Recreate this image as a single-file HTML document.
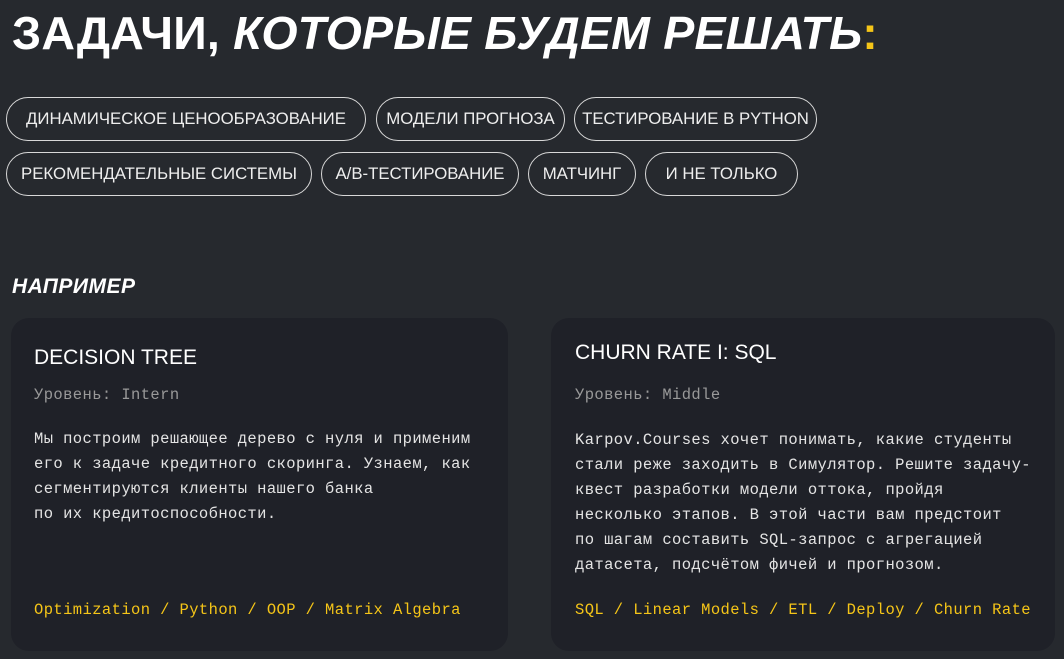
<!DOCTYPE html>
<html><head><meta charset="utf-8"><style>
*{margin:0;padding:0;box-sizing:border-box}
body{width:1064px;height:659px;background:#26292e;color:#fff;font-family:"Liberation Sans",sans-serif;position:relative;overflow:hidden}
h1{position:absolute;left:12px;top:6px;font-size:46.5px;font-weight:700;letter-spacing:0.2px;white-space:nowrap}
h1 i{font-style:italic}
h1 .y{color:#f5c518}
.pill{position:absolute;height:44px;border:1px solid #d8d8d8;border-radius:22px;font-size:16.8px;line-height:42px;text-align:center;color:#eee;white-space:nowrap}
h3{position:absolute;left:12px;top:275px;font-size:21px;font-style:italic;font-weight:700;letter-spacing:0.5px}
.card{position:absolute;top:318px;height:333px;background:#1f2128;border-radius:18px}
.t{position:absolute;left:23px;font-size:21px;color:#fff}
.m{font-family:"Liberation Mono",monospace;font-size:15.5px;letter-spacing:0.4px;position:absolute;left:23px;white-space:pre;line-height:25px}
.lv{color:#999}
.p{color:#e4e4e4}
.tg{color:#f5c518}
</style></head><body>
<h1>ЗАДАЧИ, <i>КОТОРЫЕ БУДЕМ РЕШАТЬ</i><span class="y">:</span></h1>
<div class="pill" style="left:6px;top:97px;width:360px">ДИНАМИЧЕСКОЕ ЦЕНООБРАЗОВАНИЕ</div>
<div class="pill" style="left:376px;top:97px;width:189px">МОДЕЛИ ПРОГНОЗА</div>
<div class="pill" style="left:574px;top:97px;width:243px">ТЕСТИРОВАНИЕ В PYTHON</div>
<div class="pill" style="left:6px;top:152px;width:306px">РЕКОМЕНДАТЕЛЬНЫЕ СИСТЕМЫ</div>
<div class="pill" style="left:321px;top:152px;width:198px">A/B-ТЕСТИРОВАНИЕ</div>
<div class="pill" style="left:528px;top:152px;width:108px">МАТЧИНГ</div>
<div class="pill" style="left:645px;top:152px;width:153px">И НЕ ТОЛЬКО</div>
<h3>НАПРИМЕР</h3>
<div class="card" style="left:11px;width:497px">
<div class="t" style="top:28px">DECISION TREE</div>
<div class="m lv" style="top:65px">Уровень: Intern</div>
<div class="m p" style="top:109px">Мы построим решающее дерево с нуля и применим
его к задаче кредитного скоринга. Узнаем, как
сегментируются клиенты нашего банка
по их кредитоспособности.</div>
<div class="m tg" style="top:280px">Optimization / Python / OOP / Matrix Algebra</div>
</div>
<div class="card" style="left:551px;width:504px">
<div class="t" style="top:23px;left:24px">CHURN RATE I: SQL</div>
<div class="m lv" style="top:65px;left:24px">Уровень: Middle</div>
<div class="m p" style="top:110px;left:24px">Karpov.Courses хочет понимать, какие студенты
стали реже заходить в Симулятор. Решите задачу-
квест разработки модели оттока, пройдя
несколько этапов. В этой части вам предстоит
по шагам составить SQL-запрос с агрегацией
датасета, подсчётом фичей и прогнозом.</div>
<div class="m tg" style="top:280px;left:24px">SQL / Linear Models / ETL / Deploy / Churn Rate</div>
</div>
</body></html>
